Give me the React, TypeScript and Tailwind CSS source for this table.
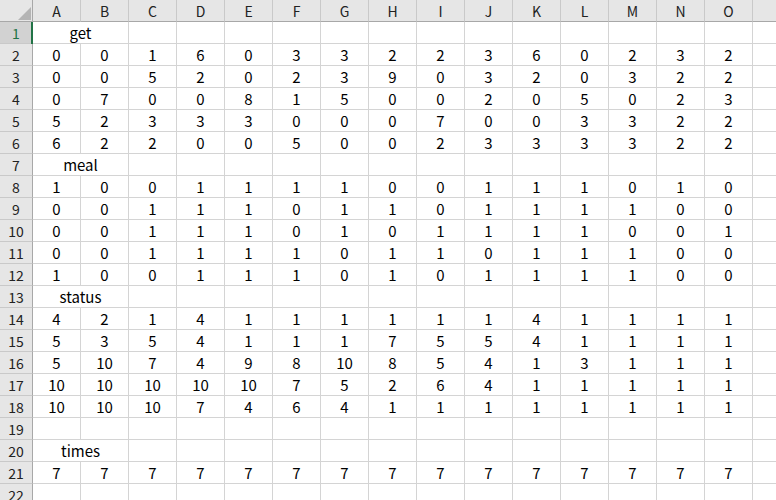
const cols = ['A', 'B', 'C', 'D', 'E', 'F', 'G', 'H', 'I', 'J', 'K', 'L', 'M', 'N', 'O'];

type Row = string | number[] | null;

const rows: Row[] = [
  'get',
  [0, 0, 1, 6, 0, 3, 3, 2, 2, 3, 6, 0, 2, 3, 2],
  [0, 0, 5, 2, 0, 2, 3, 9, 0, 3, 2, 0, 3, 2, 2],
  [0, 7, 0, 0, 8, 1, 5, 0, 0, 2, 0, 5, 0, 2, 3],
  [5, 2, 3, 3, 3, 0, 0, 0, 7, 0, 0, 3, 3, 2, 2],
  [6, 2, 2, 0, 0, 5, 0, 0, 2, 3, 3, 3, 3, 2, 2],
  'meal',
  [1, 0, 0, 1, 1, 1, 1, 0, 0, 1, 1, 1, 0, 1, 0],
  [0, 0, 1, 1, 1, 0, 1, 1, 0, 1, 1, 1, 1, 0, 0],
  [0, 0, 1, 1, 1, 0, 1, 0, 1, 1, 1, 1, 0, 0, 1],
  [0, 0, 1, 1, 1, 1, 0, 1, 1, 0, 1, 1, 1, 0, 0],
  [1, 0, 0, 1, 1, 1, 0, 1, 0, 1, 1, 1, 1, 0, 0],
  'status',
  [4, 2, 1, 4, 1, 1, 1, 1, 1, 1, 4, 1, 1, 1, 1],
  [5, 3, 5, 4, 1, 1, 1, 7, 5, 5, 4, 1, 1, 1, 1],
  [5, 10, 7, 4, 9, 8, 10, 8, 5, 4, 1, 3, 1, 1, 1],
  [10, 10, 10, 10, 10, 7, 5, 2, 6, 4, 1, 1, 1, 1, 1],
  [10, 10, 10, 7, 4, 6, 4, 1, 1, 1, 1, 1, 1, 1, 1],
  null,
  'times',
  [7, 7, 7, 7, 7, 7, 7, 7, 7, 7, 7, 7, 7, 7, 7],
  null,
];

const cell = 'h-[22px] border-r border-b border-[#d4d4d4] bg-white text-center leading-[22px]';
const rowHead = 'h-[22px] border-r border-b border-r-[#a8a8a8] border-b-[#c9c9c9] bg-[#e6e6e6] text-center leading-[22px] text-[14px] text-[#222]';

const App = () => {
  return (
    <div className="w-[776px] h-[500px] overflow-hidden bg-white font-['Noto_Sans_CJK_SC','Noto_Sans',sans-serif] text-[15px] text-black">
      <div className="grid grid-cols-[33px_repeat(15,48px)_1fr] auto-rows-[22px]">
        {/* Column headers */}
        <div className="relative h-[22px] border-r border-b border-[#a8a8a8] bg-[#e6e6e6]">
          <svg className="absolute left-[18px] top-[7px]" width="13" height="13" viewBox="0 0 13 13">
            <path d="M13 0 L13 13 L0 13 Z" fill="#b4b4b4" />
          </svg>
        </div>
        {cols.map((c) => (
          <div
            key={c}
            className="h-[22px] border-r border-b border-r-[#c9c9c9] border-b-[#a8a8a8] bg-[#e6e6e6] text-center leading-[22px] text-[14px] text-[#222]"
          >
            {c}
          </div>
        ))}
        <div className="h-[22px] border-b border-[#a8a8a8] bg-[#e6e6e6]" />

        {rows.map((r, i) => {
          const n = i + 1;
          const head =
            n === 1 ? (
              <div key={`h${n}`} className="relative h-[22px] border-b border-r border-r-[#a8a8a8] border-b-[#c9c9c9] bg-[#d2d2d2] text-center leading-[22px] text-[14px] text-[#217346]">
                {n}
                <div className="absolute right-[-1px] top-0 h-[22px] w-[2px] bg-[#217346]" />
              </div>
            ) : (
              <div key={`h${n}`} className={rowHead}>
                {n}
              </div>
            );
          let body;
          if (typeof r === 'string') {
            body = [
              <div key={`l${n}`} className={`${cell} col-span-2`}>
                {r}
              </div>,
              ...cols.slice(2).map((c) => <div key={`${c}${n}`} className={cell} />),
            ];
          } else if (r === null) {
            body = cols.map((c) => <div key={`${c}${n}`} className={cell} />);
          } else {
            body = r.map((v, j) => (
              <div key={`${cols[j]}${n}`} className={cell}>
                {v}
              </div>
            ));
          }
          return [head, ...body, <div key={`p${n}`} className="h-[22px] border-b border-[#d4d4d4] bg-white" />];
        })}
      </div>
    </div>
  );
};

export default App;
